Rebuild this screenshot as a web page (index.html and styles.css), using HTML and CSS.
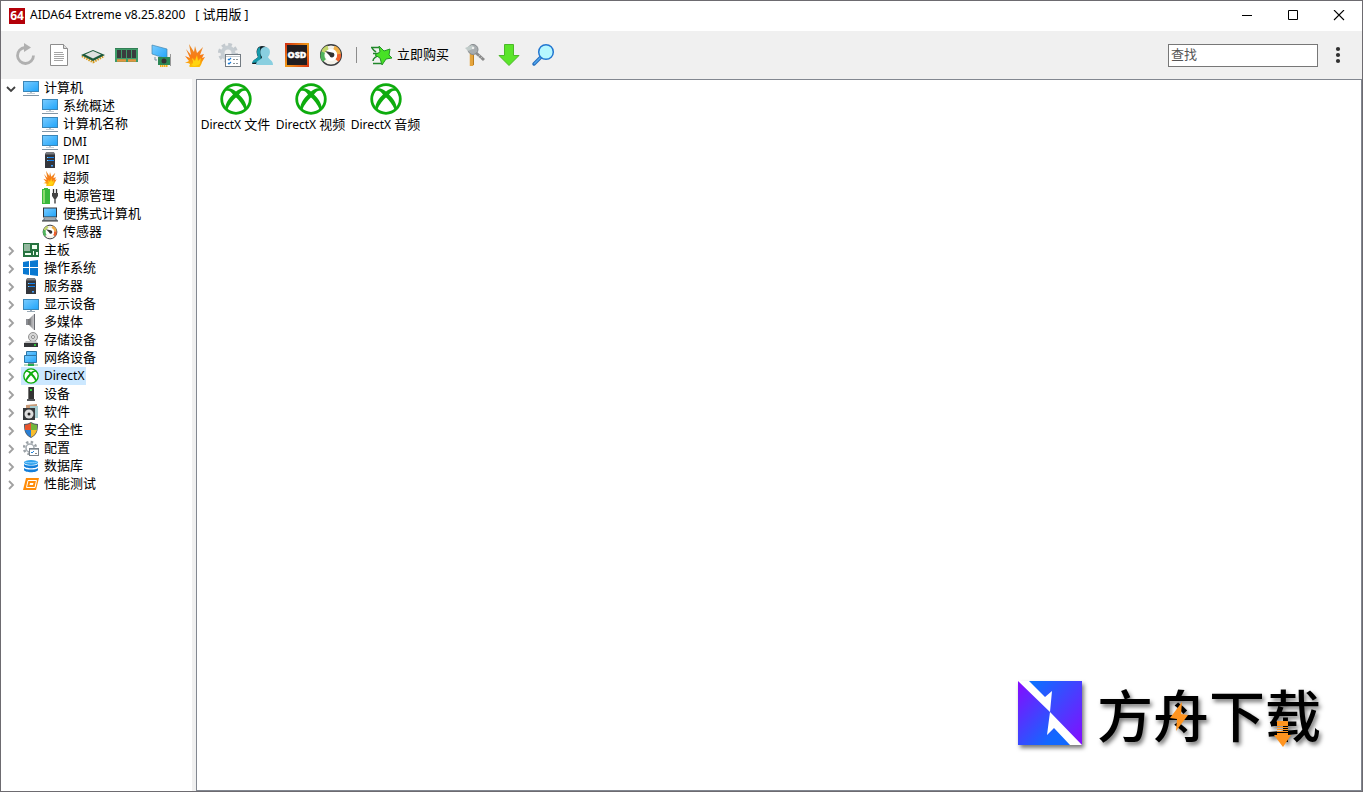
FILE: index.html
```html
<!DOCTYPE html>
<html lang="zh-CN">
<head>
<meta charset="utf-8">
<title>AIDA64 Extreme</title>
<link rel="stylesheet" href="styles.css">
</head>
<body>
<svg class="defs" aria-hidden="true">
  <defs>
    <linearGradient id="g-screen" x1="0" y1="0" x2="1" y2="1"><stop offset="0" stop-color="#7accff"/><stop offset="1" stop-color="#1fa4fa"/></linearGradient>
    <linearGradient id="g-fire" x1="0" y1="0" x2="0" y2="1"><stop offset="0" stop-color="#e8902f"/><stop offset=".5" stop-color="#f97a14"/><stop offset="1" stop-color="#ffdc00"/></linearGradient>
    <linearGradient id="g-osd" x1="0" y1="0" x2="1" y2="1"><stop offset="0" stop-color="#d02a10"/><stop offset=".5" stop-color="#f09a18"/><stop offset="1" stop-color="#d83012"/></linearGradient>
    <linearGradient id="g-speaker"><stop offset="0" stop-color="#555"/><stop offset="1" stop-color="#d4d4d8"/></linearGradient>
    <linearGradient id="g-left" x1="0" y1=".1" x2=".8" y2="1"><stop offset="0" stop-color="#8010ff"/><stop offset=".85" stop-color="#1268ff"/></linearGradient>
    <linearGradient id="g-right" x1=".1" y1="0" x2="1" y2=".9"><stop offset="0" stop-color="#0c70ff"/><stop offset="1" stop-color="#8010ff"/></linearGradient>
  </defs>
  <symbol id="i-pc" viewBox="0 0 16 16"><rect x=".5" y="1.500" width="15" height="10" fill="url(#g-screen)" stroke="#3a86b8"/><path d="M7 12h2v2H7z" fill="#b8c4cc"/><path d="M0 15.500h16" stroke="#8195a5"/><path d="M4 13.500h8" stroke="#c8d0d6"/></symbol>
  <symbol id="i-display" viewBox="0 0 16 16"><rect x=".5" y="3.500" width="15" height="10" fill="url(#g-screen)" stroke="#3a86b8"/><path d="M7 14h2v1h3v1H4v-1h3z" fill="#9aaab6"/></symbol>
  <symbol id="i-server" viewBox="0 0 16 16"><path d="M3 2l1-1h8l1 1v14H3z" fill="#34363c"/><path d="M4 0h8l1 2.500H3z" fill="#777a80"/><path d="M5 5.500h7M5 8.500h7" stroke="#1683ef"/><path d="M5 5.500h1M5 8.500h1" stroke="#7dd0ff"/><rect x="9" y="13" width="2" height="1.500" fill="#3fa0ff"/></symbol>
  <symbol id="i-fire" viewBox="0 0 24 24"><path d="M6 23C8 21 7 20 2 20l4-2-4-5 5 2-4-9 5 6L6 1l5 8 1-6 2 7 6-6-3 8 4-1-2 4 3-1-3 5c-1 5-5 8-9 8z" fill="url(#g-fire)"/><path d="M8 22c4-2 1-5 1-7l3 3 2-6 1 6 3-3-1 5c0 2-4 3-6 3z" fill="#ffd512"/></symbol>
  <symbol id="i-power" viewBox="0 0 16 16"><path d="M2 0h4v1h2v15H0V1h2z" fill="#39b83c"/><path d="M1 2h2v13H1z" fill="#8ada70"/><path d="M11.500 1v4M14.500 1v4M13 9v6.500" stroke="#333" stroke-width="1.300"/><path d="M10 5h6v3l-2 3h-2l-2-3z" fill="#444"/></symbol>
  <symbol id="i-laptop" viewBox="0 0 16 16"><rect x="1.500" y="2" width="13" height="9" fill="url(#g-screen)" stroke="#32383e"/><path d="M2 12h12l2 3H0z" fill="#7e8a94"/><path d="M3 13h10" stroke="#bdc7cc"/><path d="M0 15h16" stroke="#333"/></symbol>
  <symbol id="i-gauge" viewBox="0 0 24 24"><circle cx="12" cy="12" r="10.300" fill="#f4f2e9" stroke="#3b3d40" stroke-width="1.500"/><g fill="none" stroke-width="4"><path d="M5.400 17.500A8 8 0 0 1 4.200 9" stroke="#50b45c"/><path d="M4.200 9A8 8 0 0 1 9 4.500" stroke="#c3d66b"/><path d="M15 4.500A8 8 0 0 1 20 11" stroke="#f0ae47"/><path d="M20 11a8 8 0 0 1-2 6.500" stroke="#ee602c"/></g><circle cx="12" cy="12" r="6" fill="#fff"/><path d="M6 8l7 1.500a2.500 2.500 0 1 1-2.500 3z" fill="#333"/></symbol>
  <symbol id="i-board" viewBox="0 0 16 16"><path d="M0 1h16v14H0z" fill="#26733f"/><path d="M2 2v7M4 2v7M6 2v7" stroke="#fff"/><path d="M9 3h5v4H9zM2 11h6v2H2zM10 9h1v4h-1zM13 10h2v3h-2z" fill="#f0fff0"/></symbol>
  <symbol id="i-windows" viewBox="0 0 16 16"><path d="M0 2l6-1v6H0zM7 1l8-1v7H7zM0 8h6v7l-6-1zM7 8h8v8l-8-1z" fill="#0878d1"/></symbol>
  <symbol id="i-speaker" viewBox="0 0 16 16"><path d="M3 5h3l5-5h1v16h-1l-5-5H3z" fill="url(#g-speaker)"/><path d="M7 5v6M11.500 0v16" stroke="#686a70"/><path d="M3 5h2v6H3z" fill="#8c8e94"/></symbol>
  <symbol id="i-storage" viewBox="0 0 16 16"><circle cx="10" cy="5" r="4.500" fill="#d7d7d7" stroke="#929292"/><circle cx="10" cy="5" r="1.500" fill="#fff" stroke="#888"/><path d="M3 9h10l2 2H1z" fill="#c2c2c2"/><path d="M1 11h14v4H1z" fill="#343638"/><path d="M11 13h2" stroke="#33ee3f" stroke-width="1.500"/></symbol>
  <symbol id="i-network" viewBox="0 0 16 16"><path d="M3.500 1.500h10v6h-10z" fill="url(#g-screen)" stroke="#2d77a8"/><path d="M1.500 5.500h12v7h-12z" fill="url(#g-screen)" stroke="#2d77a8"/><path d="M5 13h6v1H5z" fill="#7c95a3"/><path d="M1 14h14v2H1z" fill="#b7d7bf"/><path d="M5 14h6v2H5z" fill="#24ac4b"/></symbol>
  <symbol id="i-dx" viewBox="0 0 32 32"><circle cx="16" cy="16" r="14.300" fill="#fff" stroke="#0eac0e" stroke-width="2.800"/><path d="M5.500 6C9 4 13 6 16 8.500 19 6 23 4 26.500 6l-1 2C23 7 21 9 19 11.500c4 3.500 8 9.500 7.500 13.500l-2 1.500C23 22 19 17 16 14.500 13 17 9 22 7.500 26.500l-2-1.500C5 21 9 15 13 11.500 11 9 9 7 6.500 8z" fill="#0eac0e"/></symbol>
  <symbol id="i-device" viewBox="0 0 16 16"><path d="M5 1h6v12H5z" fill="#333"/><path d="M5 1h1v12H5z" fill="#777"/><path d="M4 13h8v2H4z" fill="#55585b"/><path d="M7 3h2v2H7z" fill="#35dc43"/></symbol>
  <symbol id="i-software" viewBox="0 0 16 16"><path d="M3 1l11-1v13H3z" fill="#c79b79"/><path d="M7 2h8v12H7z" fill="#a5cbd0"/><path d="M0 4h12v12H0z" fill="#35383b"/><circle cx="6" cy="10" r="4.500" fill="#ddd"/><circle cx="6" cy="10" r="1.500" fill="#222"/></symbol>
  <symbol id="i-shield" viewBox="0 0 16 16"><path d="M8 0c2 1 4 2 7 2 0 7-1 11-7 14C2 13 1 9 1 2c3 0 5-1 7-2z" fill="#555d66"/><path d="M8 1v7H2V3c2 0 4-1 6-2z" fill="#e9542b"/><path d="M8 1c2 1 4 2 6 2v5H8z" fill="#71b53c"/><path d="M2 8h6v7c-3-1-5-4-6-7z" fill="#287ed4"/><path d="M8 8h6c-1 3-3 6-6 7z" fill="#f8bd2d"/></symbol>
  <symbol id="i-config" viewBox="0 0 16 16"><circle cx="7" cy="8" r="6" fill="none" stroke="#9ca2a7" stroke-width="2.500" stroke-dasharray="2.400 2.310"/><circle cx="7" cy="8" r="4" fill="#fff" stroke="#a4abb1" stroke-width="1.500"/><rect x="6.500" y="8.500" width="9" height="7" fill="#fff" stroke="#7b838a"/><path d="M7 9.500h8" stroke="#aab0b5"/><path d="M8 12l1 1 2-2" fill="none" stroke="#2384d8"/><path d="M12 13.500h2" stroke="#888"/></symbol>
  <symbol id="i-db" viewBox="0 0 16 16"><ellipse cx="8" cy="4.500" rx="7" ry="2.500" fill="#2fa3ee"/><path d="M1 6c2 2 12 2 14 0v2c-1 3-13 3-14 0zM1 10c2 2 12 2 14 0v2c-1 3-13 3-14 0z" fill="#147fda"/><path d="M2 4c2 1 10 1 12 0" fill="none" stroke="#8cd0ff"/></symbol>
  <symbol id="i-bench" viewBox="0 0 16 16"><path d="M3 2h13l-3 12H0z" fill="#ff8c08"/><path d="M5 4.500h8.500L12 11.500H3.500z" fill="none" stroke="#fff"/><path d="M7 7h3.500l-.5 2H6.500z" fill="#fff"/></symbol>
  <symbol id="i-chevron" viewBox="0 0 10 10"><path d="M3 1l4 4-4 4" fill="none" stroke="currentColor" stroke-width="1.800"/></symbol>
</svg>

<div class="window">
  <header class="titlebar">
    <svg class="app-icon" viewBox="0 0 16 16"><rect width="16" height="16" fill="#b40009"/><text x="8" y="12" class="app-icon-text">64</text></svg>
    <h1 class="title">AIDA64 Extreme v8.25.8200<span class="trial">[ <span class="cjk">试用版</span> ]</span></h1>
    <div class="caption">
      <button class="cap-btn" aria-label="最小化"><svg viewBox="0 0 12 12"><path d="M1 5.500h10" stroke="#000"/></svg></button>
      <button class="cap-btn" aria-label="最大化"><svg viewBox="0 0 12 12"><path d="M1.500 .5h9v9h-9z" stroke="#000" fill="none"/></svg></button>
      <button class="cap-btn" aria-label="关闭"><svg viewBox="0 0 12 12"><path d="M1 0l10 10M11 0L1 10" stroke="#000" stroke-width="1.100"/></svg></button>
    </div>
  </header>

  <div class="toolbar" role="toolbar">
    <button class="tool" aria-label="刷新"><svg viewBox="0 0 24 24"><path d="M13 4.500H12a8 8 0 1 0 8.500 8" fill="none" stroke="#b0b0b0" stroke-width="2.800"/><path d="M11 0l7 4.500-7 4.500z" fill="#b0b0b0"/></svg></button>
    <button class="tool" aria-label="报告"><svg viewBox="0 0 24 24"><path d="M3.500 1.500h13l4 4v17h-17z" fill="#fff" stroke="#8d8d8d"/><path d="M16.500 1.500v4h4" fill="#ddd" stroke="#8d8d8d"/><path d="M7 9.500h9M7 11.500h10M7 13.500h10M7 15.500h10M7 17.500h9" stroke="#a5a5a5"/></svg></button>
    <button class="tool" aria-label="处理器"><svg viewBox="0 0 24 24"><path d="M1 13l11 6 11-6" fill="none" stroke="#d69b1e" stroke-width="2.500" stroke-dasharray="1.500 1"/><path d="M0 12l12-5 12 5-12 6z" fill="#1d5a3c"/><path d="M4 11.500L12 8l8 3.500-8 4z" fill="#dfe1df"/></svg></button>
    <button class="tool" aria-label="内存"><svg viewBox="0 0 24 24"><path d="M0 5h23v14H0z" fill="#3e9b68"/><path d="M2 7h4v8H2zM7 7h4v8H7zM12 7h4v8h-4zM17 7h4v8h-4z" fill="#3a3c3e"/><path d="M2 17.500h9M13 17.500h8" stroke="#e4943d" stroke-width="2.500"/><path d="M0 5.500h23" stroke="#327f55"/></svg></button>
    <button class="tool" aria-label="显示"><svg viewBox="0 0 24 24"><path d="M3 2l15 4v10L3 11z" fill="url(#g-screen)" stroke="#4386b0" stroke-width=".7"/><path d="M21.500 11v12" stroke="#999"/><path d="M9 14h12v8H9z" fill="#2b8855"/><circle cx="15" cy="18" r="2.500" fill="#333"/><path d="M11 23h8" stroke="#f1ae14" stroke-width="2" stroke-dasharray="1.500 .5"/><path d="M6 14v3h2" fill="none" stroke="#7890a0"/></svg></button>
    <button class="tool" aria-label="超频"><svg><use href="#i-fire"/></svg></button>
    <button class="tool" aria-label="设置"><svg viewBox="0 0 24 24"><circle cx="11" cy="10" r="8" fill="none" stroke="#c3c9ce" stroke-width="4" stroke-dasharray="3.500 2.780"/><circle cx="11" cy="10" r="5.500" fill="none" stroke="#c6cdd2" stroke-width="4"/><rect x="8.500" y="11.500" width="15" height="12" fill="#fff" stroke="#737b82"/><path d="M9 13.500h14" stroke="#c0c7cb"/><path d="M11 16l1 1 2-2M11 20l1 1 2-2" fill="none" stroke="#1a7bd4" stroke-width="1.200"/><path d="M16 16.500h5M16 20.500h5" stroke="#8c969c" stroke-dasharray="2 1"/></svg></button>
    <button class="tool" aria-label="用户"><svg viewBox="0 0 24 24"><path d="M1 21c1-5 5-5 6-7-3-5-1-11 4-11 3 0 5 1 6 4l-4 14z" fill="#101f26"/><path d="M1 20c1-4 5-4 6-6-2-5-1-9 2-10l1 15z" fill="#169aab"/><path d="M5 22c0-5 6-5 6-8-3-4-2-10 3-10 6 0 6 7 3 10 1 3 5 3 5 8z" fill="#89cfe0"/></svg></button>
    <button class="tool" aria-label="OSD"><svg viewBox="0 0 24 24"><rect width="24" height="24" fill="url(#g-osd)"/><rect x="2" y="2" width="20" height="20" fill="#211d20"/><text x="12" y="15" class="osd-text">OSD</text></svg></button>
    <button class="tool" aria-label="传感器"><svg><use href="#i-gauge"/></svg></button>
    <span class="separator"></span>
    <button class="tool buy"><svg viewBox="0 0 24 24"><path d="M2 4.500h8M4 10.500h6M3 4c0 3 2 3 4 5M4 20.500h8M4 18c0-3 2-3 4-5" fill="none" stroke="#20872b" stroke-width="1.500"/><path d="M10 3l5 5 6-2-1 6 3 3-6 1-4 6-2-7-5-3 5-3z" fill="#47e225" stroke="#249527"/></svg><span class="buy-label cjk">立即购买</span></button>
    <button class="tool" aria-label="许可证"><svg viewBox="0 0 24 24"><path d="M8.500 9v14" stroke="#e5a43c" stroke-width="3.500"/><path d="M10.500 12v10" stroke="#b97d20"/><path d="M12 9l9 8" stroke="#8b8b8b" stroke-width="3"/><path d="M17 16l2-2M15 14l2-2" stroke="#bbb"/><circle cx="10" cy="6.500" r="5" fill="#a8adb0" stroke="#868b8e"/><path d="M2 5l7-3 3 3-7 3z" fill="#c1ccca"/><circle cx="10" cy="5" r="1.200" fill="#eee"/></svg></button>
    <button class="tool" aria-label="更新"><svg viewBox="0 0 24 24"><path d="M7.500 1.500h9v11h5.500L12 22.500 2 12.500h5.500z" fill="#5be52a" stroke="#4ab928"/></svg></button>
    <button class="tool" aria-label="搜索"><svg viewBox="0 0 24 24"><path d="M10 14l-7 7" stroke="#246dbd" stroke-width="3.500" stroke-linecap="round"/><path d="M10 14l-7 7" stroke="#52a8ee" stroke-width="1.500"/><circle cx="15" cy="9" r="7.300" fill="#b6f7ff" stroke="#2377d1" stroke-width="1.500"/></svg></button>
    <input class="search cjk" type="text" placeholder="查找" aria-label="查找">
    <button class="more" aria-label="更多"><svg viewBox="0 0 6 18"><circle cx="3" cy="3" r="2.100"/><circle cx="3" cy="9" r="2.100"/><circle cx="3" cy="15" r="2.100"/></svg></button>
  </div>

  <div class="content">
    <nav class="sidebar">
      <ul class="tree">
        <li><div class="row"><svg class="chev open"><use href="#i-chevron"/></svg><a class="node" href="#"><svg><use href="#i-pc"/></svg>计算机</a></div>
          <ul class="branch">
            <li class="row"><a class="node" href="#"><svg><use href="#i-pc"/></svg>系统概述</a></li>
            <li class="row"><a class="node" href="#"><svg><use href="#i-pc"/></svg>计算机名称</a></li>
            <li class="row"><a class="node latin" href="#"><svg><use href="#i-pc"/></svg>DMI</a></li>
            <li class="row"><a class="node latin" href="#"><svg><use href="#i-server"/></svg>IPMI</a></li>
            <li class="row"><a class="node" href="#"><svg><use href="#i-fire"/></svg>超频</a></li>
            <li class="row"><a class="node" href="#"><svg><use href="#i-power"/></svg>电源管理</a></li>
            <li class="row"><a class="node" href="#"><svg><use href="#i-laptop"/></svg>便携式计算机</a></li>
            <li class="row"><a class="node" href="#"><svg><use href="#i-gauge"/></svg>传感器</a></li>
          </ul>
        </li>
        <li class="row"><svg class="chev"><use href="#i-chevron"/></svg><a class="node" href="#"><svg><use href="#i-board"/></svg>主板</a></li>
        <li class="row"><svg class="chev"><use href="#i-chevron"/></svg><a class="node" href="#"><svg><use href="#i-windows"/></svg>操作系统</a></li>
        <li class="row"><svg class="chev"><use href="#i-chevron"/></svg><a class="node" href="#"><svg><use href="#i-server"/></svg>服务器</a></li>
        <li class="row"><svg class="chev"><use href="#i-chevron"/></svg><a class="node" href="#"><svg><use href="#i-display"/></svg>显示设备</a></li>
        <li class="row"><svg class="chev"><use href="#i-chevron"/></svg><a class="node" href="#"><svg><use href="#i-speaker"/></svg>多媒体</a></li>
        <li class="row"><svg class="chev"><use href="#i-chevron"/></svg><a class="node" href="#"><svg><use href="#i-storage"/></svg>存储设备</a></li>
        <li class="row"><svg class="chev"><use href="#i-chevron"/></svg><a class="node" href="#"><svg><use href="#i-network"/></svg>网络设备</a></li>
        <li class="row"><svg class="chev"><use href="#i-chevron"/></svg><a class="node latin selected" href="#"><svg><use href="#i-dx"/></svg>DirectX</a></li>
        <li class="row"><svg class="chev"><use href="#i-chevron"/></svg><a class="node" href="#"><svg><use href="#i-device"/></svg>设备</a></li>
        <li class="row"><svg class="chev"><use href="#i-chevron"/></svg><a class="node" href="#"><svg><use href="#i-software"/></svg>软件</a></li>
        <li class="row"><svg class="chev"><use href="#i-chevron"/></svg><a class="node" href="#"><svg><use href="#i-shield"/></svg>安全性</a></li>
        <li class="row"><svg class="chev"><use href="#i-chevron"/></svg><a class="node" href="#"><svg><use href="#i-config"/></svg>配置</a></li>
        <li class="row"><svg class="chev"><use href="#i-chevron"/></svg><a class="node" href="#"><svg><use href="#i-db"/></svg>数据库</a></li>
        <li class="row"><svg class="chev"><use href="#i-chevron"/></svg><a class="node" href="#"><svg><use href="#i-bench"/></svg>性能测试</a></li>
      </ul>
    </nav>
    <main class="panel">
      <div class="tiles">
        <a class="tile" href="#"><svg><use href="#i-dx"/></svg><span>DirectX <span class="cjk">文件</span></span></a>
        <a class="tile" href="#"><svg><use href="#i-dx"/></svg><span>DirectX <span class="cjk">视频</span></span></a>
        <a class="tile" href="#"><svg><use href="#i-dx"/></svg><span>DirectX <span class="cjk">音频</span></span></a>
      </div>
      <div class="brand">
        <svg class="brand-logo" viewBox="0 0 64 64"><rect width="64" height="64" fill="#fff"/><path d="M0 0l32 31-3 23 7-7 16 17H0z" fill="url(#g-left)"/><path d="M11 0h53v64L32 31l2-21-7 6z" fill="url(#g-right)"/></svg>
        <div class="brand-name">方舟下载<svg class="brand-accents" viewBox="0 0 224 64"><path d="M85 20L73 36l7 1-1 12 12-16-7-1z"/><path d="M180 39h11v5h-11zM180 45h11v1h-11zM180 47h11v1h-11zM180 49h11v1h-11zM180 51h11v2h3l-8 12-9-12h3z"/></svg></div>
      </div>
    </main>
  </div>
</div>
</body>
</html>
```
FILE: styles.css
```css
* { box-sizing: border-box; }

body {
  margin: 0;
  font: 12px/18px "Noto Sans", "Noto Sans CJK SC", sans-serif;
  color: #000;
}

.defs { position: absolute; width: 0; height: 0; }
button { border: 0; padding: 0; background: none; font: inherit; color: inherit; }
a { color: inherit; text-decoration: none; }
ul { list-style: none; margin: 0; padding: 0; }
svg { display: block; flex: none; }
.cjk { font-family: "Noto Sans CJK SC", sans-serif; font-size: 13px; line-height: 16px; }

.window {
  display: flex;
  flex-direction: column;
  height: 100vh;
  border: 1px solid #6d6b70;
  background: #f0f0f0;
}

.titlebar {
  display: flex;
  align-items: center;
  height: 30px;
  padding-left: 8px;
  background: #fff;
}
.app-icon { width: 16px; height: 16px; }
.app-icon-text { font: bold 12px "Open Sans", sans-serif; fill: #fff; text-anchor: middle; }
.title {
  margin: 0 0 0 5px;
  padding-bottom: 2px;
  font-size: 12px;
  font-weight: 400;
  white-space: nowrap;
}
.trial { margin-left: 10px; }
.caption { display: flex; margin-left: auto; height: 100%; }
.cap-btn { display: grid; place-items: center; width: 46px; }
.cap-btn svg { width: 12px; height: 12px; }

.toolbar {
  display: flex;
  align-items: center;
  height: 48px;
  padding: 0 6px 0 7px;
}
.tool { display: flex; align-items: center; justify-content: center; width: 34px; height: 34px; }
.tool svg { width: 24px; height: 24px; }
.buy { width: auto; padding: 0 9px 0 3px; gap: 4px; }
.buy-label { padding-bottom: 2px; }
.separator { width: 1px; height: 16px; margin: 0 9px 0 8px; background: #8c8c8c; }
.osd-text { font: 800 9px "Open Sans", sans-serif; fill: #fff; stroke: #fff; stroke-width: .4px; text-anchor: middle; }
.search {
  width: 150px;
  height: 23px;
  margin-left: auto;
  padding: 0 2px 4px;
  border: 1px solid #777;
  background: #fff;
}
.search::placeholder { color: #555; }
.more { display: grid; place-items: center; width: 36px; height: 34px; margin-left: 2px; }
.more svg { width: 6px; height: 18px; fill: #303030; }

.content { display: flex; flex: 1; min-height: 0; }
.sidebar {
  width: 191px;
  margin-right: 4px;
  background: #fff;
  font: 13px/16px "Noto Sans CJK SC", sans-serif;
}
.row { display: flex; align-items: center; height: 18px; padding-left: 5px; }
.chev { width: 10px; height: 10px; margin: 2px 5px 0 0; color: #a0a0a0; }
.chev.open { transform: rotate(90deg); color: #404040; }
.branch .row { padding-left: 39px; }
.node {
  display: flex;
  align-items: center;
  height: 18px;
  padding: 0 3px 2px 2px;
  gap: 5px;
  white-space: nowrap;
}
.node svg { width: 16px; height: 16px; margin-top: 2px; }
.latin { padding: 0 2px; font: 12px/18px "Noto Sans", sans-serif; }
.latin svg { margin-top: 0; }
.selected { background: #cce8ff; }

.panel {
  position: relative;
  flex: 1;
  border: 1px solid #828790;
  background: #fff;
}
.tiles { display: flex; flex-wrap: wrap; padding: 3px 1px; }
.tile {
  display: flex;
  flex-direction: column;
  align-items: center;
  width: 75px;
  gap: 1px;
  white-space: nowrap;
}
.tile svg { width: 32px; height: 32px; }

.brand {
  position: absolute;
  right: 40px;
  bottom: 45px;
  display: flex;
  align-items: center;
  gap: 15px;
}
.brand-logo { width: 64px; height: 64px; filter: drop-shadow(2px 3px 2px #0008); }
.brand-name {
  position: relative;
  font: 500 56px/62px "Noto Sans CJK SC", sans-serif;
  text-shadow: 2px 3px 4px #0008;
}
.brand-accents {
  position: absolute;
  inset: 0;
  width: 100%;
  height: 64px;
  overflow: visible;
  fill: #ff941f;
}
```
